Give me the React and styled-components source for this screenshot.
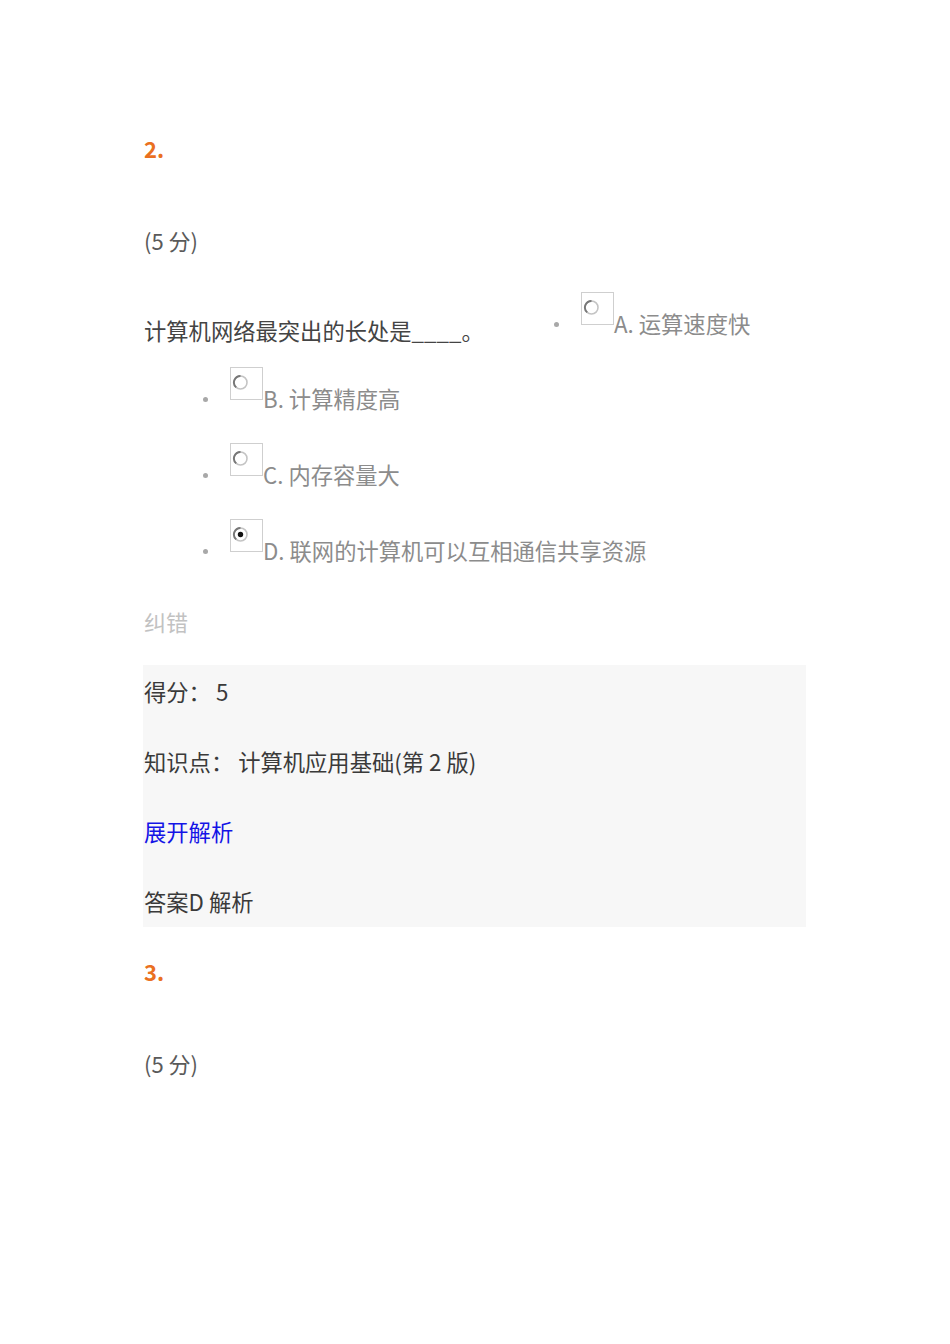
import React from 'react';
import styled, { createGlobalStyle } from 'styled-components';

const GlobalStyle = createGlobalStyle`
  body {
    margin: 0;
    background: #ffffff;
    font-family: "Noto Sans CJK SC", "Noto Sans", sans-serif;
  }
`;

const Page = styled.div`
  width: 950px;
  height: 1344px;
  overflow: hidden;
  padding: 132px 0 0 144px;
  box-sizing: border-box;
`;

const Section = styled.section`
  display: flex;
  flex-direction: column;
  align-items: flex-start;
  margin-top: ${p => p.$top}px;
`;

const QNum = styled.div`
  font-size: 22px;
  line-height: 32px;
  font-weight: 700;
  color: #ea7020;
`;

const Points = styled.div`
  margin-top: 60px;
  font-size: 22px;
  line-height: 32px;
  color: #5a5a5a;
`;

const QuestionRow = styled.div`
  display: flex;
  align-items: flex-start;
  margin-top: 36px;
`;

const QuestionText = styled.div`
  margin-top: 22px;
  font-size: 22.3px;
  line-height: 32px;
  color: #444;
  width: 410px;
`;

const OptionList = styled.ul`
  list-style: none;
  margin: 21px 0 0;
  padding: 0 0 0 59px;
  display: flex;
  flex-direction: column;
  gap: 29px;
`;

const OptionItem = styled.li`
  display: flex;
  align-items: flex-start;
`;

const Bullet = styled.span`
  width: 5px;
  height: 5px;
  border-radius: 50%;
  background: #a8a8a8;
  margin-top: 30px;
  margin-right: 22px;
  flex: none;
`;

const Box = styled.span`
  width: 33px;
  height: 33px;
  box-sizing: border-box;
  border: 1px solid #cfcfcf;
  flex: none;
  display: flex;
  align-items: flex-start;
  padding: 6px 0 0 1px;
`;

const Label = styled.span`
  margin-top: 15px;
  font-size: 22.3px;
  line-height: 32px;
  color: #8c8c8c;
  white-space: nowrap;
`;

const Correct = styled.div`
  margin-top: 39px;
  font-size: 22px;
  line-height: 32px;
  color: #c2c2c2;
`;

const Panel = styled.div`
  margin-top: 28px;
  margin-left: -1px;
  width: 663px;
  box-sizing: border-box;
  padding: 0 0 0 1px;
  background: #f7f7f7;
  display: flex;
  flex-direction: column;
  gap: 18px;
`;

const PanelLine = styled.div`
  font-size: 22.3px;
  line-height: 52px;
  color: ${p => (p.$link ? '#1414e6' : '#3a3a3a')};
  white-space: pre;
`;

const Radio = ({ checked }) => (
  <svg width="17" height="17" viewBox="0 0 17 17">
    <circle cx="8.5" cy="8.5" r="6.5" fill="#fff" stroke="#c4c4c4" strokeWidth="1.6" />
    <path d="M8.5 2 A6.5 6.5 0 0 0 4.2 13.4" fill="none" stroke="#777" strokeWidth="1.9" />
    {checked && <circle cx="8.5" cy="8.5" r="2.7" fill="#111" />}
  </svg>
);

const Option = ({ label, checked }) => (
  <OptionItem>
    <Bullet />
    <Box>
      <Radio checked={checked} />
    </Box>
    <Label>{label}</Label>
  </OptionItem>
);

export default function App() {
  return (
    <Page>
      <GlobalStyle />
      <Section $top={0}>
        <QNum>2.</QNum>
        <Points>(5 分)</Points>
        <QuestionRow>
          <QuestionText>计算机网络最突出的长处是____。</QuestionText>
          <Option label="A. 运算速度快" />
        </QuestionRow>
        <OptionList>
          <Option label="B. 计算精度高" />
          <Option label="C. 内存容量大" />
          <Option label="D. 联网的计算机可以互相通信共享资源" checked />
        </OptionList>
        <Correct>纠错</Correct>
        <Panel>
          <PanelLine>得分： 5</PanelLine>
          <PanelLine>知识点： 计算机应用基础(第 2 版)</PanelLine>
          <PanelLine $link>展开解析</PanelLine>
          <PanelLine>答案D 解析</PanelLine>
        </Panel>
      </Section>
      <Section $top={28}>
        <QNum>3.</QNum>
        <Points>(5 分)</Points>
      </Section>
    </Page>
  );
}
